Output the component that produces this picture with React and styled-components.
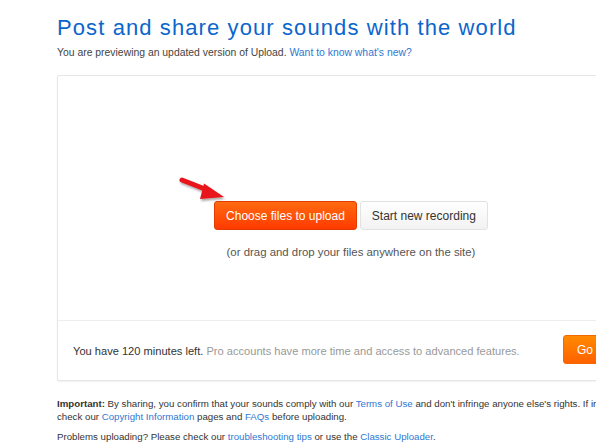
import styled, { createGlobalStyle } from "styled-components";

const GlobalStyle = createGlobalStyle`
  html, body {
    margin: 0;
    padding: 0;
    background: #fff;
    overflow: hidden;
  }
  body {
    font-family: "Liberation Sans", Arial, sans-serif;
    color: #333;
  }
`;

const Page = styled.div`
  width: 588px;
  padding: 13px 0 0 57px;
`;

const Title = styled.h1`
  margin: 0;
  font-size: 22px;
  line-height: 30px;
  font-weight: 400;
  color: #0b66cc;
  letter-spacing: 1.1px;
  white-space: nowrap;
`;

const Sub = styled.p`
  margin: 3px 0 0;
  font-size: 10.4px;
  line-height: 14px;
  color: #444;
  white-space: nowrap;
`;

const Link = styled.a`
  color: #2f78d2;
  text-decoration: none;
  cursor: pointer;
`;

const Panel = styled.div`
  margin-top: 15px;
  border: 1px solid #e6e6e6;
  border-radius: 2px;
  box-shadow: 0 1px 2px rgba(0, 0, 0, 0.06);
  background: #fff;
`;

const DropArea = styled.div`
  position: relative;
  height: 245px;
  padding-top: 125px;
  box-sizing: border-box;
  display: flex;
  flex-direction: column;
  align-items: center;
  border-bottom: 1px solid #eee;
`;

const ButtonRow = styled.div`
  position: relative;
  display: flex;
  gap: 3px;
`;

const Button = styled.button`
  height: 29px;
  padding: 0 11px;
  border-radius: 3px;
  font-family: "Liberation Sans", Arial, sans-serif;
  font-size: 12px;
  cursor: pointer;
  border: 1px solid ${(p) => (p.$primary ? "#e23d00" : "#e2e2e2")};
  color: ${(p) => (p.$primary ? "#fff" : "#333")};
  background: ${(p) =>
    p.$primary
      ? "linear-gradient(#ff6a10, #ff3a00)"
      : "linear-gradient(#fff, #f2f2f2)"};
`;

const Arrow = styled.svg`
  position: absolute;
  left: -36px;
  top: -25px;
  overflow: visible;
`;

const Hint = styled.p`
  margin: 15px 0 0;
  font-size: 11.4px;
  line-height: 14px;
  color: #555;
`;

const Quota = styled.div`
  height: 59px;
  display: flex;
  align-items: center;
  justify-content: space-between;
  padding: 0 15px;
  font-size: 11.1px;
  white-space: nowrap;
`;

const Muted = styled.span`
  color: #999;
`;

const GoButton = styled.button`
  height: 29px;
  padding: 0 13px;
  margin-top: -2px;
  border: 1px solid #f16a00;
  border-radius: 3px;
  background: linear-gradient(#ff8a00, #ff6200);
  color: #fff;
  font-family: "Liberation Sans", Arial, sans-serif;
  font-size: 12px;
  white-space: nowrap;
  cursor: pointer;
`;

const Notes = styled.div`
  margin-top: 16px;
  font-size: 9.7px;
  line-height: 13px;
  color: #333;
`;

const Note = styled.p`
  margin: 0 0 ${(p) => p.$gap || 0}px;
  white-space: nowrap;
`;

const App = () => {
  return (
    <>
      <GlobalStyle />
      <Page>
        <Title>Post and share your sounds with the world</Title>
        <Sub>
          You are previewing an updated version of Upload.{" "}
          <Link>Want to know what's new?</Link>
        </Sub>
        <Panel>
          <DropArea>
            <ButtonRow>
              <Arrow width="50" height="26" viewBox="0 0 50 26">
                <defs>
                  <filter id="sh" x="-20%" y="-20%" width="140%" height="160%">
                    <feDropShadow dx="1" dy="2" stdDeviation="1.2" floodOpacity="0.35" />
                  </filter>
                </defs>
                <g filter="url(#sh)">
                  <path
                    d="M4 4 L32 15"
                    stroke="#e8161a"
                    strokeWidth="5"
                    strokeLinecap="round"
                  />
                  <path d="M26 7.5 L46 21 L22 23 Z" fill="#e8161a" />
                </g>
              </Arrow>
              <Button $primary>Choose files to upload</Button>
              <Button>Start new recording</Button>
            </ButtonRow>
            <Hint>(or drag and drop your files anywhere on the site)</Hint>
          </DropArea>
          <Quota>
            <span>
              You have 120 minutes left.{" "}
              <Muted>
                Pro accounts have more time and access to advanced features.
              </Muted>
            </span>
            <GoButton>Go Pro</GoButton>
          </Quota>
        </Panel>
        <Notes>
          <Note>
            <b>Important:</b> By sharing, you confirm that your sounds comply
            with our <Link>Terms of Use</Link> and don't infringe anyone else's
            rights. If in doubt,
          </Note>
          <Note $gap={7}>
            check our <Link>Copyright Information</Link> pages and{" "}
            <Link>FAQs</Link> before uploading.
          </Note>
          <Note>
            Problems uploading? Please check our{" "}
            <Link>troubleshooting tips</Link> or use the{" "}
            <Link>Classic Uploader</Link>.
          </Note>
        </Notes>
      </Page>
    </>
  );
};

export default App;
